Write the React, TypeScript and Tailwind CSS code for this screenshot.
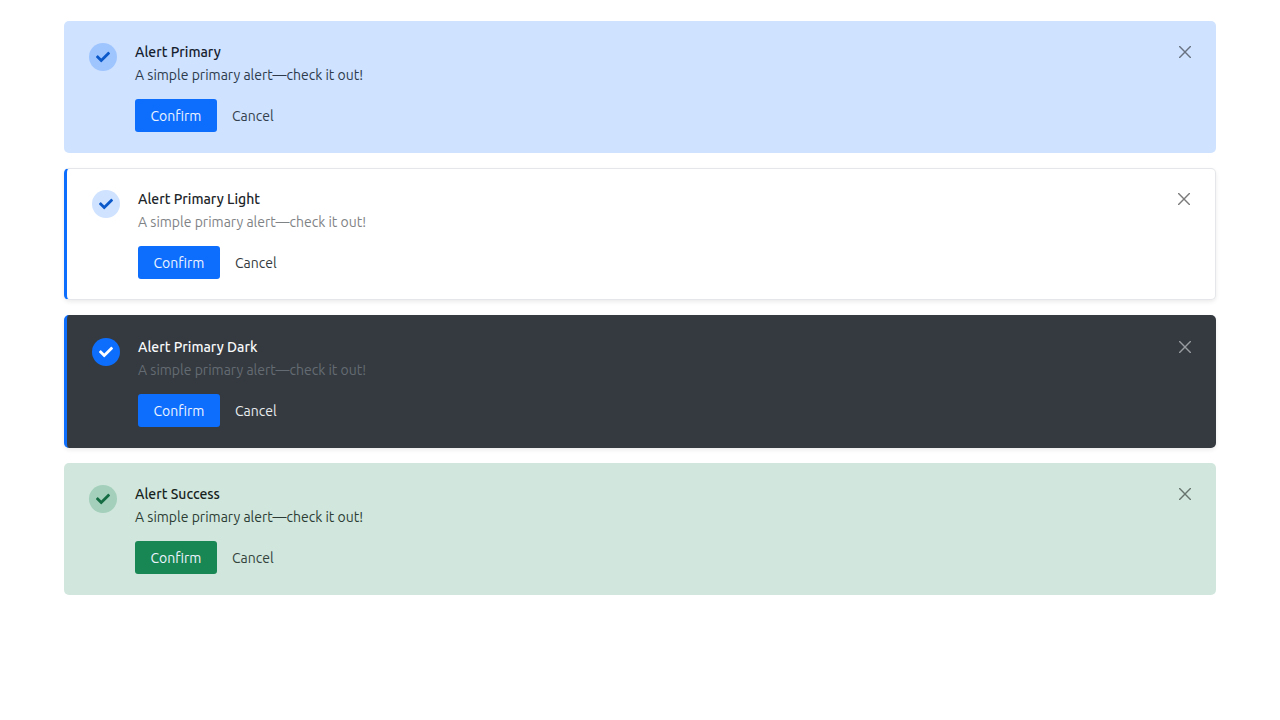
import { useId } from "react";
import { FaCheck } from "react-icons/fa";

type AlertProps = {
  title: string;
  card: string;
  icon: string;
  titleColor: string;
  messageColor: string;
  confirm: string;
  cancel: string;
  close: string;
};

const alerts: AlertProps[] = [
  {
    title: "Alert Primary",
    card: "bg-[#cfe2ff] pt-5 pb-[21px] px-[25px]",
    icon: "bg-[#9fc5ff] text-[#0a58ca]",
    titleColor: "text-[#15202e]",
    messageColor: "text-[#2c3a4c]",
    confirm: "bg-[#0d6efd]",
    cancel: "text-[#343f4d]",
    close: "text-[#687280]",
  },
  {
    title: "Alert Primary Light",
    card: "bg-white border border-l-[3px] border-[#e4e6e9] border-l-[#0d6efd] shadow-[0_2px_4px_rgba(0,0,0,0.08)] pt-[19px] pb-5 px-[25px]",
    icon: "bg-[#cfe2ff] text-[#0a58ca]",
    titleColor: "text-[#212529]",
    messageColor: "text-[#7f8386]",
    confirm: "bg-[#0d6efd]",
    cancel: "text-[#343a40]",
    close: "text-[#7b7b7b]",
  },
  {
    title: "Alert Primary Dark",
    card: "bg-[#343a40] border-l-[3px] border-[#0d6efd] shadow-[0_2px_4px_rgba(0,0,0,0.08)] py-[21px] px-[25px]",
    icon: "bg-[#0d6efd] text-white",
    titleColor: "text-[#f8f9fa]",
    messageColor: "text-[#656b72]",
    confirm: "bg-[#0d6efd]",
    cancel: "text-[#e9ecef]",
    close: "text-[#989b9f]",
  },
  {
    title: "Alert Success",
    card: "bg-[#d1e7dd] pt-5 pb-[21px] px-[25px]",
    icon: "bg-[#a3cfbb] text-[#146c43]",
    titleColor: "text-[#17231d]",
    messageColor: "text-[#2c3c34]",
    confirm: "bg-[#198754]",
    cancel: "text-[#34433c]",
    close: "text-[#68756f]",
  },
];

function Alert(props: AlertProps) {
  const titleId = useId();
  return (
    <section
      aria-labelledby={titleId}
      className={`flex items-start rounded-[5px] ${props.card}`}
    >
      <span
        className={`mt-0.5 mr-[18px] flex size-7 shrink-0 items-center justify-center rounded-full ${props.icon}`}
      >
        <FaCheck className="size-3.5" aria-hidden="true" />
      </span>
      <div className="grow">
        <h2
          id={titleId}
          className={`text-sm leading-[22px] font-medium ${props.titleColor}`}
        >
          {props.title}
        </h2>
        <p className={`text-sm leading-6 ${props.messageColor}`}>
          A simple primary alert—check it out!
        </p>
        <div className="mt-3 flex text-sm">
          <button
            type="button"
            className={`h-[33px] w-[82px] rounded-[3px] text-[#eef4ff] ${props.confirm}`}
          >
            Confirm
          </button>
          <button type="button" className={`h-[33px] px-[15px] ${props.cancel}`}>
            Cancel
          </button>
        </div>
      </div>
      <button type="button" aria-label="Close" className={`mt-[5px] ${props.close}`}>
        <svg viewBox="0 0 12 12" className="size-3" fill="none" aria-hidden="true">
          <path
            d="M.6.6 11.4 11.4M11.4.6.6 11.4"
            stroke="currentColor"
            strokeWidth="1.4"
            strokeLinecap="round"
          />
        </svg>
      </button>
    </section>
  );
}

export default function App() {
  return (
    <main className="flex min-h-screen flex-col gap-[15px] bg-white px-16 py-[21px] font-['Ubuntu','Noto_Sans',sans-serif]">
      {alerts.map((alert) => (
        <Alert key={alert.title} {...alert} />
      ))}
    </main>
  );
}
